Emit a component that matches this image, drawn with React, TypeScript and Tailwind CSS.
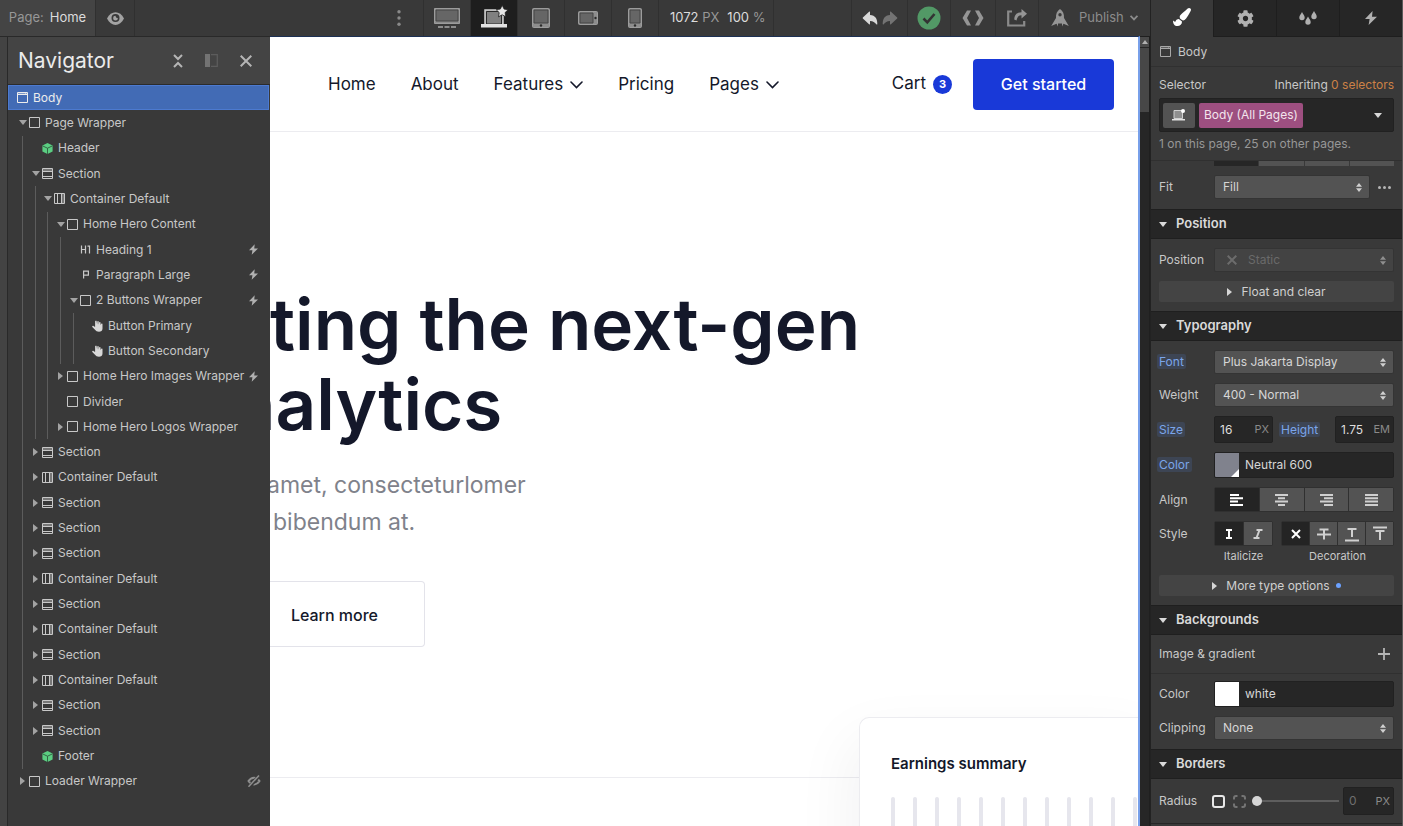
import type { ReactNode } from 'react';
import { FaCog, FaPaintBrush } from 'react-icons/fa';
import { IoArrowRedo, IoArrowUndo } from 'react-icons/io5';

type IconKind = 'box' | 'section' | 'container' | 'component' | 'h1' | 'p' | 'button';
type TreeRow = {
  depth: number;
  label: string;
  icon: IconKind;
  state?: 'open' | 'closed';
  mark?: 'bolt' | 'hidden';
};

const rows: TreeRow[] = [
  { depth: 1, label: 'Page Wrapper', icon: 'box', state: 'open' },
  { depth: 2, label: 'Header', icon: 'component' },
  { depth: 2, label: 'Section', icon: 'section', state: 'open' },
  { depth: 3, label: 'Container Default', icon: 'container', state: 'open' },
  { depth: 4, label: 'Home Hero Content', icon: 'box', state: 'open' },
  { depth: 5, label: 'Heading 1', icon: 'h1', mark: 'bolt' },
  { depth: 5, label: 'Paragraph Large', icon: 'p', mark: 'bolt' },
  { depth: 5, label: '2 Buttons Wrapper', icon: 'box', state: 'open', mark: 'bolt' },
  { depth: 6, label: 'Button Primary', icon: 'button' },
  { depth: 6, label: 'Button Secondary', icon: 'button' },
  { depth: 4, label: 'Home Hero Images Wrapper', icon: 'box', state: 'closed', mark: 'bolt' },
  { depth: 4, label: 'Divider', icon: 'box' },
  { depth: 4, label: 'Home Hero Logos Wrapper', icon: 'box', state: 'closed' },
  { depth: 2, label: 'Section', icon: 'section', state: 'closed' },
  { depth: 2, label: 'Container Default', icon: 'container', state: 'closed' },
  { depth: 2, label: 'Section', icon: 'section', state: 'closed' },
  { depth: 2, label: 'Section', icon: 'section', state: 'closed' },
  { depth: 2, label: 'Section', icon: 'section', state: 'closed' },
  { depth: 2, label: 'Container Default', icon: 'container', state: 'closed' },
  { depth: 2, label: 'Section', icon: 'section', state: 'closed' },
  { depth: 2, label: 'Container Default', icon: 'container', state: 'closed' },
  { depth: 2, label: 'Section', icon: 'section', state: 'closed' },
  { depth: 2, label: 'Container Default', icon: 'container', state: 'closed' },
  { depth: 2, label: 'Section', icon: 'section', state: 'closed' },
  { depth: 2, label: 'Section', icon: 'section', state: 'closed' },
  { depth: 2, label: 'Footer', icon: 'component' },
  { depth: 1, label: 'Loader Wrapper', icon: 'box', state: 'closed', mark: 'hidden' },
];

// Width of each indent column; its guide line sits below the parent's arrow.
const indents = ['w-[13px]', 'w-[12px]', 'w-[13px]', 'w-[13px]', 'w-[12px]'];

function Triangle({ dir, className = '' }: { dir: 'down' | 'right' | 'up'; className?: string }) {
  if (dir === 'right')
    return (
      <svg viewBox="0 0 5 8" className={`h-2 w-[5px] ${className}`} fill="currentColor" aria-hidden="true">
        <path d="M0 0L5 4L0 8z" />
      </svg>
    );
  return (
    <svg viewBox="0 0 8 5" className={`h-[5px] w-2 ${dir === 'up' ? 'rotate-180' : ''} ${className}`} fill="currentColor" aria-hidden="true">
      <path d="M0 0H8L4 5z" />
    </svg>
  );
}

function Bolt({ className }: { className: string }) {
  return (
    <svg viewBox="0 0 12 14" className={className} fill="currentColor" aria-hidden="true">
      <path d="M7.6 0L0 8H4.600L3.600 14L12 5.700H7z" />
    </svg>
  );
}

function WindowIcon({ className }: { className: string }) {
  return (
    <svg viewBox="0 0 11 11" className={className} aria-hidden="true">
      <path d="M.5 .5h10v10H.5z" fill="none" stroke="currentColor" />
      <path d="M1 2.5h9" stroke="currentColor" />
      <path d="M1.5 1.5h1m1 0h1m1 0h1m1 0h2" stroke="currentColor" opacity=".7" />
    </svg>
  );
}

function NodeIcon({ kind }: { kind: IconKind }) {
  if (kind === 'component')
    return (
      <svg viewBox="0 0 11 11" className="size-[11px] shrink-0" aria-hidden="true">
        <path d="M5.500 0L10.600 2.500V8.500L5.500 11L.4 8.500V2.500z" fill="#5bce82" />
        <path d="M.6 2.900L5.500 5.200L10.400 2.900M5.500 5.200V11" fill="none" stroke="#2f5a3e" strokeWidth=".9" />
      </svg>
    );
  if (kind === 'button')
    return (
      <svg viewBox="0 0 11 12" className="h-3 w-[11px] shrink-0" fill="#d8d8d8" aria-hidden="true">
        <path d="M3.100 7V1.200a.8.8 0 0 1 1.500-.1L5.100 4.600L5.300 1.800a.7.7 0 0 1 1.400 0V4.700L7.100 2.500a.7.7 0 0 1 1.400.2V5L9.200 3.800a.7.7 0 0 1 1.300.4V8.500C10.500 10.800 9 11.700 7 11.700C5 11.700 4 11 3 9.800L.3 6.900C-.2 6.200.8 5.400 1.500 5.900z" />
      </svg>
    );
  if (kind === 'h1')
    return (
      <svg viewBox="0 0 11 11" className="size-[11px] shrink-0" fill="none" stroke="#c8c8c8" strokeWidth="1.2" aria-hidden="true">
        <path d="M1.500 1.500v8M5.500 1.500v8M1.500 5.500h4M7.500 2.100h2v7.400" />
      </svg>
    );
  if (kind === 'p')
    return (
      <svg viewBox="0 0 11 11" className="size-[11px] shrink-0" fill="none" stroke="#c8c8c8" strokeWidth="1.2" aria-hidden="true">
        <path d="M3.600 9.500v-7.400h4.800v4H3.600" />
      </svg>
    );
  return (
    <svg viewBox="0 0 11 11" className="size-[11px] shrink-0" fill="none" stroke="#c8c8c8" aria-hidden="true">
      <path d="M.5 .5h10v10H.5z" />
      {kind === 'section' && (
        <>
          <path d="M1 1h9v2H1z" fill="#777" stroke="none" />
          <path d="M1 3.500h9M1 8.500h9" />
        </>
      )}
      {kind === 'container' && (
        <>
          <path d="M8 1h2v9H8z" fill="#777" stroke="none" />
          <path d="M3.500 1v9M7.500 1v9" />
        </>
      )}
    </svg>
  );
}

function HiddenIcon() {
  return (
    <svg viewBox="0 0 14 12" className="h-3 w-[14px] text-[#8f8f8f]" fill="none" stroke="currentColor" strokeWidth="2" aria-hidden="true">
      <path d="M1.500 6c3-4.500 8-4.500 11 0c-3 4.500-8 4.500-11 0z" />
      <path d="M12.500 .5l-10 11" stroke="#393939" strokeWidth="3.500" />
      <path d="M12 .5l-10.500 11.200" strokeWidth="1.500" />
    </svg>
  );
}

function Navigator() {
  return (
    <aside className="flex w-[263px] shrink-0 flex-col border-t border-l border-[#292929] bg-[#393939] text-xs text-[#c8c8c8]">
      <header className="flex h-[48px] shrink-0 items-center border-b border-[#2b2b2b] bg-[#444444] pr-[18px] pl-[10px]">
        <h2 className="flex-1 text-[21px] leading-7 text-[#ebebeb]">Navigator</h2>
        <div className="flex items-center gap-[22px]">
          <button aria-label="Collapse all" className="text-[#b5b5b5]">
            <svg viewBox="0 0 10 14" className="h-[14px] w-[10px]" fill="none" stroke="currentColor" strokeWidth="2">
              <path d="M1 1l4 4l4-4M1 13l4-4l4 4" />
            </svg>
          </button>
          <button aria-label="Dock panel" className="text-[#737373]">
            <svg viewBox="0 0 13 13" className="size-[13px]">
              <path d="M0 0h5v13H0z" fill="currentColor" />
              <path d="M6 .7h6.300v11.600H6" fill="none" stroke="#5c5c5c" strokeWidth="1.300" />
            </svg>
          </button>
          <button aria-label="Close" className="text-[#b5b5b5]">
            <svg viewBox="0 0 12 12" className="size-3" fill="none" stroke="currentColor" strokeWidth="2">
              <path d="M.7 .7l10.600 10.600M11.300 .7L.7 11.300" />
            </svg>
          </button>
        </div>
      </header>
      <ul className="mb-8 grid min-h-0 flex-1 auto-rows-fr">
        <li className="mr-px flex items-center gap-[5px] border border-[#4c7ad0] bg-[#426bb5] pl-2 text-[#ececec]">
          <WindowIcon className="size-[11px]" />
          Body
        </li>
        {rows.map((row, i) => (
          <li key={i} className="flex items-center pl-[11px]">
            {indents.slice(0, row.depth - 1).map((w, k) => (
              <span key={k} className={`flex shrink-0 self-stretch pl-[3px] ${w}`}>
                <span className="w-px bg-[#5c5c5c]" />
              </span>
            ))}
            <span className="flex w-[7px] shrink-0 justify-center text-[#a3a3a3]">
              {row.state && (
                <Triangle dir={row.state === 'open' ? 'down' : 'right'} className="shrink-0" />
              )}
            </span>
            <span className="flex flex-1 items-center gap-[5px] pl-[3px] whitespace-nowrap">
              <NodeIcon kind={row.icon} />
              {row.label}
            </span>
            {row.mark === 'bolt' && <Bolt className="mr-3 h-[11px] w-[9px] shrink-0 text-[#b0b0b0]" />}
            {row.mark === 'hidden' && (
              <span className="mr-[9px]">
                <HiddenIcon />
              </span>
            )}
          </li>
        ))}
      </ul>
    </aside>
  );
}

function DesktopIcon() {
  return (
    <svg viewBox="0 0 26 21" className="h-[21px] w-[26px]" aria-hidden="true">
      <path d="M.5 .5h25v15H.5z" fill="#8d8d8d" stroke="#9c9c9c" />
      <path d="M2 2h22v11H2z" fill="#666" stroke="#444" />
      <path d="M4 18h5v2H4zM10.500 18h5v2h-5zM17 18h5v2h-5z" fill="#8d8d8d" />
    </svg>
  );
}

function LaptopStarIcon() {
  return (
    <svg viewBox="0 0 27 24" className="h-6 w-[27px]" aria-hidden="true">
      <path d="M4 5h18v14H4z" fill="#808080" stroke="#d2d2d2" strokeWidth="1.500" />
      <path d="M5.500 6.500h15V19h-15z" fill="#808080" stroke="#2a2a2a" />
      <path d="M0 19h26v3.500H0z" fill="#e2e2e2" />
      <path d="M21.200 .2l1.900 3.900l4 .6l-3 2.900l.7 4.200l-3.600-2l-3.700 2l.7-4.200l-3-2.900l4.100-.6z" fill="#e6e6e6" stroke="#1d1d1d" strokeWidth=".8" />
    </svg>
  );
}

function TabletIcon() {
  return (
    <svg viewBox="0 0 18 20" className="h-5 w-[18px]" aria-hidden="true">
      <rect x=".5" y=".5" width="17" height="19" rx="1" fill="#8d8d8d" stroke="#9c9c9c" />
      <path d="M2 2h14v13H2z" fill="#666" stroke="#444" />
      <circle cx="9" cy="17.500" r="1.200" fill="#2b2b2b" />
    </svg>
  );
}

function LandscapeIcon() {
  return (
    <svg viewBox="0 0 20 14" className="h-[14px] w-5" aria-hidden="true">
      <rect x=".5" y=".5" width="19" height="13" rx="1" fill="#8d8d8d" stroke="#9c9c9c" />
      <path d="M2 2h13v10H2z" fill="#666" stroke="#444" />
      <circle cx="17.500" cy="7" r="1.200" fill="#2b2b2b" />
    </svg>
  );
}

function PhoneIcon() {
  return (
    <svg viewBox="0 0 14 20" className="h-5 w-[14px]" aria-hidden="true">
      <rect x=".5" y=".5" width="13" height="19" rx="1" fill="#8d8d8d" stroke="#9c9c9c" />
      <path d="M2 2h10v13H2z" fill="#666" stroke="#444" />
      <circle cx="7" cy="17.500" r="1.200" fill="#2b2b2b" />
    </svg>
  );
}

function DeviceButton({ label, active = false, children }: { label: string; active?: boolean; children: ReactNode }) {
  return (
    <button
      aria-label={label}
      aria-pressed={active}
      className={`flex w-[47px] items-center justify-center border-r border-[#303030] ${active ? 'bg-[#1e1e1e] pb-[3px]' : ''}`}
    >
      {children}
    </button>
  );
}

function Toolbar() {
  return (
    <header className="flex h-9 shrink-0 bg-[#393939] text-[13px] text-[#dcdcdc]">
      <button className="flex w-24 items-center justify-center gap-[6px] border-r border-[#303030] bg-[#444444]">
        <span className="text-[#979797]">Page:</span>Home
      </button>
      <button aria-label="Preview" className="flex w-[39px] items-center justify-center border-r border-[#303030]">
        <svg viewBox="0 0 17 13" className="h-[13px] w-[17px]" aria-hidden="true">
          <path d="M0 6.500C4-2 13-2 17 6.500C13 15 4 15 0 6.500z" fill="#a3a3a3" />
          <circle cx="8.500" cy="6" r="4" fill="#393939" />
          <path d="M8.500 3.800a2.400 2.400 0 1 0 2.400 2.400a2.400 2.400 0 0 1-2.400-2.400z" fill="#a3a3a3" />
        </svg>
      </button>
      <div className="flex flex-1 justify-end">
        <button aria-label="More breakpoints" className="flex w-[50px] items-center justify-center border-r border-[#303030]">
          <svg viewBox="0 0 4 16" className="h-4 w-1" fill="#8a8a8a" aria-hidden="true">
            <circle cx="2" cy="1.800" r="1.700" />
            <circle cx="2" cy="8" r="1.700" />
            <circle cx="2" cy="14.200" r="1.700" />
          </svg>
        </button>
      </div>
      <DeviceButton label="Desktop">
        <DesktopIcon />
      </DeviceButton>
      <DeviceButton label="Laptop" active>
        <LaptopStarIcon />
      </DeviceButton>
      <DeviceButton label="Tablet">
        <TabletIcon />
      </DeviceButton>
      <DeviceButton label="Mobile landscape">
        <LandscapeIcon />
      </DeviceButton>
      <DeviceButton label="Mobile portrait">
        <PhoneIcon />
      </DeviceButton>
      <div className="flex w-[115px] items-center gap-[8px] border-r border-[#303030] pl-[11px] whitespace-nowrap">
        <span>
          1072 <span className="text-[#979797]">PX</span>
        </span>
        <span>
          100 <span className="text-[#979797]">%</span>
        </span>
      </div>
      <div className="w-[78px] border-r border-[#303030]" />
      <div className="flex w-14 items-center justify-center gap-[2px] border-r border-[#303030]">
        <button aria-label="Undo">
          <IoArrowUndo className="size-[18px] text-[#d8d8d8]" />
        </button>
        <button aria-label="Redo">
          <IoArrowRedo className="size-[18px] text-[#737373]" />
        </button>
      </div>
      <button aria-label="Saved" className="flex w-[43px] items-center justify-center border-r border-[#303030]">
        <svg viewBox="0 0 24 24" className="size-6" aria-hidden="true">
          <circle cx="12" cy="12" r="11.500" fill="#529966" />
          <path d="M6.500 12.500l3.800 3.800L17.500 8" fill="none" stroke="#333" strokeWidth="2.600" />
        </svg>
      </button>
      <button aria-label="Export code" className="flex w-[45px] items-center justify-center border-r border-[#303030]">
        <svg viewBox="0 0 22 16" className="h-4 w-[22px]" fill="#959595" aria-hidden="true">
          <path d="M5 .5h4L5 8l4 7.500H5L.5 8zM17 .5h-4L17 8l-4 7.500h4L21.500 8z" />
        </svg>
      </button>
      <button aria-label="Share" className="flex w-[43px] items-center justify-center border-r border-[#303030]">
        <svg viewBox="0 0 20 18" className="h-[18px] w-5" aria-hidden="true">
          <path d="M5 2.500H1.200v14h16V12" fill="none" stroke="#8a8a8a" strokeWidth="2.200" />
          <path d="M14.500 0L20 4.700L14.500 9.400V6.300C11.500 6.300 10.300 8 9.500 11.500L7.200 10.500C7.500 5.500 10 3.200 14.500 3.200z" fill="#959595" />
        </svg>
      </button>
      <button className="flex w-[111px] items-center gap-[10px] pl-3 text-[#8c8c8c]">
        <svg viewBox="0 0 18 18" className="size-[18px]" fill="#959595" aria-hidden="true">
          <path fillRule="evenodd" d="M9 0C12 2 13.300 5 13 9L17.800 17L12.500 14.800L11 17.500V14.500H7V17.500L5.500 14.800L.2 17L5 9C4.700 5 6 2 9 0zM9 4a1.700 1.700 0 1 0 0 3.400A1.700 1.700 0 1 0 9 4z" />
        </svg>
        <span className="flex items-center gap-[6px]">
          Publish
          <svg viewBox="0 0 8 6" className="h-[6px] w-2" fill="none" stroke="currentColor" strokeWidth="1.700" aria-hidden="true">
            <path d="M.6 .8L4 4.400L7.400 .8" />
          </svg>
        </span>
      </button>
    </header>
  );
}

function NavChevron() {
  return (
    <svg viewBox="0 0 13 8" className="h-2 w-[13px]" fill="none" stroke="currentColor" strokeWidth="1.600" strokeLinecap="round" aria-hidden="true">
      <path d="M1 1l5.500 5.500L12 1" />
    </svg>
  );
}

function Site() {
  return (
    <main className="relative flex min-w-0 flex-1 flex-col overflow-hidden border-t border-r-2 border-t-[#1c3054] border-r-[#78a0ea] bg-white text-[17px] text-[#14182a]">
      <header className="flex h-[95px] shrink-0 items-center justify-between border-b border-[#ececf0] pr-6 pl-[58px] whitespace-nowrap">
        <nav className="flex items-center gap-[35px] pt-px">
          <a href="#home">Home</a>
          <a href="#about">About</a>
          <a href="#features" className="flex items-center gap-[7px]">
            Features <NavChevron />
          </a>
          <a href="#pricing">Pricing</a>
          <a href="#pages" className="flex items-center gap-[7px]">
            Pages <NavChevron />
          </a>
        </nav>
        <div className="flex items-center gap-[21px]">
          <a href="#cart" className="flex items-center gap-[7px]">
            Cart
            <span className="flex size-[19px] items-center justify-center rounded-full bg-[#1939d8] text-[11px] font-bold text-white">3</span>
          </a>
          <button className="h-[51px] w-[141px] rounded bg-[#1939d8] text-base font-medium text-white">Get started</button>
        </div>
      </header>
      <section className="h-[646px] shrink-0 border-b border-[#ececf0] pt-[152px] whitespace-nowrap">
        <h1 className="text-[71px] leading-[80px] font-semibold">
          <span className="block">ting the next-gen</span>
          <span className="-ml-[38px] block">nalytics</span>
        </h1>
        <p className="mt-[23px] text-[23px] leading-[37px] text-[#7f828b]">
          <span className="-ml-[3px] block">amet, consecteturlomer</span>
          <span className="ml-[3px] block">bibendum at.</span>
        </p>
        <button className="mt-10 h-[66px] w-[155px] rounded-r border border-l-0 border-[#e3e3ea] pt-[2px] pr-[46px] text-right text-base font-medium">
          Learn more
        </button>
      </section>
      <section className="absolute top-[680px] right-0 h-[400px] w-[279px] rounded-tl-[10px] border-t border-l border-[#ececf0] bg-white pt-[32px] pl-[31px] shadow-[0_30px_60px_10px_rgba(20,24,42,0.05)]">
        <h2 className="text-[15px] leading-7 font-semibold">Earnings summary</h2>
        <div className="mt-[19px] flex gap-[18px]">
          {Array.from({ length: 12 }, (_, i) => (
            <span key={i} className="h-40 w-1 shrink-0 rounded-full bg-[#e6e6ed]" />
          ))}
        </div>
      </section>
    </main>
  );
}

function Scrollbar() {
  return (
    <div className="flex w-[10px] shrink-0 flex-col border-t border-r border-[#1f1f1f] bg-[#262626]">
      <div className="flex h-[10px] items-center justify-center bg-[#4a4a4a]">
        <svg viewBox="0 0 6 4" className="h-1 w-[6px]" fill="#b0b0b0" aria-hidden="true">
          <path d="M0 4L3 0L6 4z" />
        </svg>
      </div>
      <div className="mt-px h-16 bg-[#474747]" />
    </div>
  );
}

function SectionHead({ children }: { children: ReactNode }) {
  return (
    <h3 className="h-[30px] shrink-0 border-y border-[#1f1f1f] bg-[#262626]">
      <button className="flex h-full w-full items-center gap-[9px] pl-2 text-[13px] font-semibold text-[#dadada]">
        <Triangle dir="down" />
        {children}
      </button>
    </h3>
  );
}

function UpDown({ className = '' }: { className?: string }) {
  return (
    <svg viewBox="0 0 6 9" className={`h-[9px] w-[6px] ${className}`} fill="currentColor" aria-hidden="true">
      <path d="M0 3.700L3 0L6 3.700zM0 5.300L3 9L6 5.300z" />
    </svg>
  );
}

function Select({ id, value, disabled = false }: { id: string; value: string; disabled?: boolean }) {
  return (
    <div className="grid flex-1 items-center">
      <select
        id={id}
        disabled={disabled}
        className={`col-start-1 row-start-1 h-6 w-full appearance-none rounded-[2px] border border-[#343434] ${
          disabled ? 'bg-[#434343] pl-[33px] text-[#6a6a6a] opacity-100' : 'bg-[#535353] pl-2 text-[#d6d6d6]'
        }`}
      >
        <option>{value}</option>
      </select>
      {disabled && (
        <svg viewBox="0 0 10 10" className="pointer-events-none col-start-1 row-start-1 ml-[13px] size-[10px] text-[#6c6c6c]" stroke="currentColor" strokeWidth="2" aria-hidden="true">
          <path d="M.7 .7l8.600 8.600M9.300 .7L.7 9.300" />
        </svg>
      )}
      <UpDown className={`pointer-events-none col-start-1 row-start-1 mr-2 justify-self-end ${disabled ? 'text-[#8f8f8f]' : 'text-[#d0d0d0]'}`} />
    </div>
  );
}

function Field({ label, htmlFor, marked = false, children }: { label: string; htmlFor: string; marked?: boolean; children: ReactNode }) {
  return (
    <div className="flex items-center">
      <div className="w-[55px] shrink-0">
        <Label htmlFor={htmlFor} marked={marked}>
          {label}
        </Label>
      </div>
      {children}
    </div>
  );
}

function Label({ htmlFor, marked = false, children }: { htmlFor: string; marked?: boolean; children: ReactNode }) {
  return (
    <label htmlFor={htmlFor} className={marked ? '-mx-[2px] rounded-[2px] bg-[#3d4554] px-[2px] text-[#7ba5ea]' : ''}>
      {children}
    </label>
  );
}

function NumberBox({ id, value, unit, muted = false }: { id: string; value: string; unit: string; muted?: boolean }) {
  return (
    <div className={`flex items-center rounded-[2px] border border-[#212121] bg-[#262626] pr-[3px] pl-[5px] ${muted ? 'h-7 w-[51px]' : 'h-[27px] w-[59px]'}`}>
      <input id={id} aria-label={muted ? 'Radius value' : undefined} defaultValue={value} className={`w-0 flex-1 bg-transparent ${muted ? 'text-[#6f6f6f]' : 'text-[#dedede]'}`} />
      <span className="text-[11px] text-[#8a8a8a]">{unit}</span>
    </div>
  );
}

function ColorBox({ id, value, children }: { id: string; value: string; children: ReactNode }) {
  return (
    <div className="flex h-[26px] flex-1 overflow-hidden rounded-[2px] border border-[#212121] bg-[#262626]">
      {children}
      <input id={id} defaultValue={value} className="w-0 flex-1 bg-transparent pl-[6px] text-[#d6d6d6]" />
    </div>
  );
}

function Seg({ label, active = false, children }: { label: string; active?: boolean; children: ReactNode }) {
  return (
    <button
      aria-label={label}
      aria-pressed={active}
      className={`flex flex-1 items-center justify-center ${active ? 'bg-[#242424] text-white' : 'bg-[#535353] text-[#d0d0d0]'}`}
    >
      {children}
    </button>
  );
}

function Lines({ d }: { d: string }) {
  return (
    <svg viewBox="0 0 13 12" className="h-3 w-[13px]" stroke="currentColor" strokeWidth="2" aria-hidden="true">
      <path d={d} />
    </svg>
  );
}

function Glyph({ d }: { d: string }) {
  return (
    <svg viewBox="0 0 14 16" className="h-4 w-[14px] shrink-0" fill="none" stroke="currentColor" strokeWidth="2" aria-hidden="true">
      <path d={d} />
    </svg>
  );
}

function Fold({ label, dot = false }: { label: string; dot?: boolean }) {
  return (
    <button className="flex h-[21px] items-center justify-center gap-[9px] rounded-[2px] bg-[#444444] text-[#cfcfcf]">
      <Triangle dir="right" className="text-[#d6d6d6]" />
      <span className="flex items-center gap-[6px]">
        {label}
        {dot && <span className="size-[5px] rounded-full bg-[#6ba1ff]" />}
      </span>
    </button>
  );
}

function StylePanel() {
  return (
    <aside className="flex w-[253px] shrink-0 flex-col overflow-hidden border-x border-l-[#222222] border-r-[#5a5a5a] bg-[#393939] text-xs text-[#c8c8c8]">
      <div className="flex h-[37px] shrink-0">
        <button aria-label="Style" className="flex flex-1 items-center justify-center pb-[3px] text-white">
          <FaPaintBrush className="size-[18px]" />
        </button>
        <button aria-label="Settings" className="flex flex-1 items-center justify-center border-b border-l border-[#1e1e1e] bg-[#262626] text-[#b0b0b0]">
          <FaCog className="size-[17px]" />
        </button>
        <button aria-label="Interactions manager" className="flex flex-1 items-center justify-center border-b border-l border-[#1e1e1e] bg-[#262626] text-[#b0b0b0]">
          <svg viewBox="0 0 18 14" className="h-[14px] w-[18px]" fill="currentColor" aria-hidden="true">
            <path d="M3 1C4.300 3.500 5.700 4.800 5.700 6.500a2.700 2.700 0 0 1-5.400 0C.3 4.800 1.700 3.500 3 1z" />
            <path d="M9 5.500c1.300 2.500 2.700 3.800 2.700 5.500a2.700 2.700 0 0 1-5.400 0C6.300 9.300 7.700 8 9 5.500z" />
            <path d="M15 0c1.300 2.500 2.700 3.800 2.700 5.500a2.700 2.700 0 0 1-5.400 0C12.300 3.800 13.700 2.500 15 0z" />
          </svg>
        </button>
        <button aria-label="Interactions" className="flex flex-1 items-center justify-center border-b border-l border-[#1e1e1e] bg-[#262626] text-[#b0b0b0]">
          <Bolt className="h-[14px] w-3" />
        </button>
      </div>

      <div className="flex h-[30px] shrink-0 items-center gap-[7px] border-b border-[#303030] pl-[9px]">
        <WindowIcon className="size-[11px] text-[#a8a8a8]" />
        Body
      </div>

      <div className="shrink-0 border-b border-[#303030] px-2 pt-[9px] pb-2">
        <div className="flex h-[18px] items-center justify-between">
          <label htmlFor="selector">Selector</label>
          <span>
            Inheriting <span className="text-[#cc8146]">0 selectors</span>
          </span>
        </div>
        <div className="mt-1 flex h-[34px] items-center gap-1 rounded-[2px] border border-[#212121] bg-[#262626] px-[3px]">
          <button aria-label="States" className="flex h-[25px] w-8 items-center justify-center rounded-[2px] bg-[#535353]">
            <svg viewBox="0 0 14 12" className="h-3 w-[14px]" aria-hidden="true">
              <path d="M2 1.500h8.500v8H2z" fill="#8f8f8f" stroke="#d0d0d0" />
              <path d="M0 10h13v1.500H0z" fill="#e2e2e2" />
              <circle cx="11" cy="2" r="2" fill="#fff" />
            </svg>
          </button>
          <button id="selector" className="h-[25px] rounded-[2px] bg-[#9d4f80] px-[5px] text-[#f3e4ed]">
            Body (All Pages)
          </button>
          <button aria-label="Open selector list" className="flex h-full flex-1 items-center justify-end pr-[7px] text-[#d8d8d8]">
            <Triangle dir="down" className="h-[5px] w-[10px]" />
          </button>
        </div>
        <p className="mt-1 h-4 leading-4 text-[#979797]">1 on this page, 25 on other pages.</p>
      </div>

      <div className="mr-2 ml-[63px] flex h-[5px] shrink-0 gap-px">
        <span className="flex-1 bg-[#262626]" />
        <span className="flex-1 bg-[#535353]" />
        <span className="flex-1 bg-[#535353]" />
        <span className="flex-1 bg-[#535353]" />
      </div>
      <div className="shrink-0 pt-[9px] pr-[11px] pb-[10px] pl-2">
        <Field label="Fit" htmlFor="fit">
          <Select id="fit" value="Fill" />
          <button aria-label="More layout options" className="ml-2 flex gap-[2px]">
            <span className="size-[3px] rounded-full bg-[#b5b5b5]" />
            <span className="size-[3px] rounded-full bg-[#b5b5b5]" />
            <span className="size-[3px] rounded-full bg-[#b5b5b5]" />
          </button>
        </Field>
      </div>

      <SectionHead>Position</SectionHead>
      <div className="flex shrink-0 flex-col gap-[9px] px-2 py-[9px]">
        <Field label="Position" htmlFor="position">
          <Select id="position" value="Static" disabled />
        </Field>
        <Fold label="Float and clear" />
      </div>

      <SectionHead>Typography</SectionHead>
      <div className="flex shrink-0 flex-col gap-[9px] px-2 py-[9px]">
        <Field label="Font" htmlFor="font" marked>
          <Select id="font" value="Plus Jakarta Display" />
        </Field>
        <Field label="Weight" htmlFor="weight">
          <Select id="weight" value="400 - Normal" />
        </Field>
        <Field label="Size" htmlFor="size" marked>
          <div className="flex flex-1 items-center">
            <NumberBox id="size" value="16" unit="PX" />
            <span className="flex-1 pl-2">
              <Label htmlFor="height" marked>
                Height
              </Label>
            </span>
            <NumberBox id="height" value="1.75" unit="EM" />
          </div>
        </Field>
        <Field label="Color" htmlFor="color" marked>
          <ColorBox id="color" value="Neutral 600">
            <svg viewBox="0 0 24 24" className="size-6" aria-hidden="true">
              <path d="M0 0h24v24H0z" fill="#80828d" />
              <path d="M24 16v8h-8z" fill="#fff" />
            </svg>
          </ColorBox>
        </Field>
        <div className="flex items-center">
          <span className="w-[55px]">Align</span>
          <div className="flex h-[25px] flex-1 gap-px rounded-[2px] border border-[#303030] bg-[#303030]">
            <Seg label="Align left" active>
              <Lines d="M0 1h9M0 4.300h13M0 7.600h8M0 11h13" />
            </Seg>
            <Seg label="Align center">
              <Lines d="M0 1h13M3 4.300h7M0 7.600h13M3 11h7" />
            </Seg>
            <Seg label="Align right">
              <Lines d="M0 1h13M4 4.300h9M0 7.600h13M4 11h9" />
            </Seg>
            <Seg label="Justify">
              <Lines d="M0 1h13M0 4.300h13M0 7.600h13M0 11h13" />
            </Seg>
          </div>
        </div>
        <div>
          <div className="flex items-center">
            <span className="w-[55px]">Style</span>
            <div className="flex flex-1 gap-2">
              <div className="flex h-[25px] w-[59px] gap-px rounded-[2px] border border-[#303030] bg-[#303030]">
                <Seg label="Regular" active>
                  <Glyph d="M4 4h6M4 12h6M7 4v8" />
                </Seg>
                <Seg label="Italic">
                  <Glyph d="M5.500 4h6M2.500 12h6M8.500 4l-3 8" />
                </Seg>
              </div>
              <div className="flex h-[25px] flex-1 gap-px rounded-[2px] border border-[#303030] bg-[#303030]">
                <Seg label="No decoration" active>
                  <Glyph d="M3 4l8 8M11 4l-8 8" />
                </Seg>
                <Seg label="Strikethrough">
                  <Glyph d="M2.500 3.500h9M7 3.500v10M0 8.500h14" />
                </Seg>
                <Seg label="Underline">
                  <Glyph d="M2.500 3h9M7 3v8M0 14.500h14" />
                </Seg>
                <Seg label="Overline">
                  <Glyph d="M2.500 5h9M7 5v9M0 1.500h14" />
                </Seg>
              </div>
            </div>
          </div>
          <div className="flex h-5 items-center gap-2 pl-[55px] text-[11px]">
            <span className="w-[59px] text-center">Italicize</span>
            <span className="flex-1 text-center">Decoration</span>
          </div>
        </div>
        <Fold label="More type options" dot />
      </div>

      <SectionHead>Backgrounds</SectionHead>
      <div className="flex h-[39px] shrink-0 items-center justify-between border-b border-[#303030] pr-3 pl-2">
        Image &amp; gradient
        <button aria-label="Add background">
          <svg viewBox="0 0 12 12" className="size-3" stroke="#b5b5b5" strokeWidth="1.800" aria-hidden="true">
            <path d="M6 0v12M0 6h12" />
          </svg>
        </button>
      </div>
      <div className="flex shrink-0 flex-col gap-[9px] px-2 pt-[7px] pb-[9px]">
        <Field label="Color" htmlFor="bg-color">
          <ColorBox id="bg-color" value="white">
            <span className="size-6 bg-white" />
          </ColorBox>
        </Field>
        <Field label="Clipping" htmlFor="clipping">
          <Select id="clipping" value="None" />
        </Field>
      </div>

      <SectionHead>Borders</SectionHead>
      <div className="shrink-0 border-b border-[#262626] px-2 py-2">
        <Field label="Radius" htmlFor="radius">
          <button aria-label="All corners" className="ml-[-2px] size-[13px] rounded-[3px] border-2 border-[#e8e8e8]" />
          <button aria-label="Individual corners" className="ml-2">
            <svg viewBox="0 0 13 13" className="size-[13px]" fill="none" stroke="#757575" strokeWidth="2" aria-hidden="true">
              <path d="M1 4.500V3a2 2 0 0 1 2-2h1.500M8.500 1H10a2 2 0 0 1 2 2v1.500M12 8.500V10a2 2 0 0 1-2 2H8.500M4.500 12H3a2 2 0 0 1-2-2V8.500" />
            </svg>
          </button>
          <input
            id="radius"
            type="range"
            defaultValue={0}
            className="mr-1 ml-[6px] h-3 w-0 flex-1 appearance-none bg-transparent [&::-webkit-slider-runnable-track]:h-[2px] [&::-webkit-slider-runnable-track]:bg-[#5e5e5e] [&::-webkit-slider-thumb]:-mt-[4px] [&::-webkit-slider-thumb]:size-[10px] [&::-webkit-slider-thumb]:appearance-none [&::-webkit-slider-thumb]:rounded-full [&::-webkit-slider-thumb]:bg-[#d6d6d6]"
          />
          <NumberBox id="radius-value" value="0" unit="PX" muted />
        </Field>
      </div>
      <div className="flex-1" />
    </aside>
  );
}

export default function App() {
  return (
    <div className="flex h-screen overflow-hidden bg-[#393939] font-['Inter','Liberation_Sans',sans-serif]">
      <div className="flex min-w-0 flex-1 flex-col">
        <Toolbar />
        <div className="flex min-h-0 flex-1">
          <div className="w-[7px] shrink-0 border-t border-[#292929] bg-[#434343]" />
          <Navigator />
          <Site />
          <Scrollbar />
        </div>
      </div>
      <StylePanel />
    </div>
  );
}
